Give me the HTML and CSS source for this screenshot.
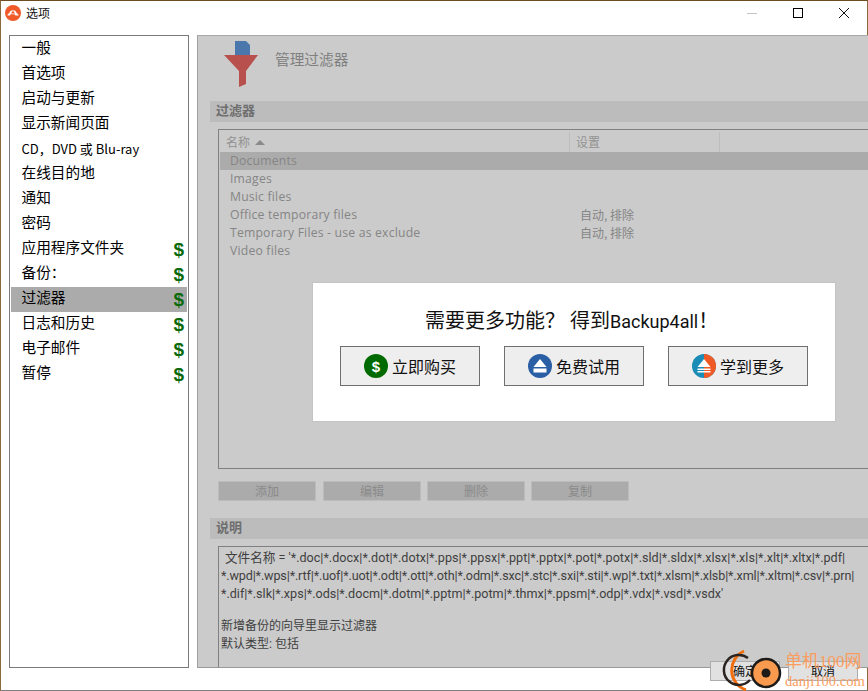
FILE: index.html
```html
<!DOCTYPE html>
<html lang="zh">
<head>
<meta charset="utf-8">
<title>选项</title>
<link rel="stylesheet" href="styles.css">
</head>
<body>
<div class="window">
  <header class="titlebar">
    <svg class="app-icon" viewBox="0 0 16 16"><circle cx="8" cy="8" r="8" fill="#ef5a28"/><path d="M2.500 10.500a2 2 0 0 1 1.800-2.200 3.800 3.800 0 0 1 7.400 0 2 2 0 0 1 1.800 2.200h-3l-1-1.200h-3.900l-.6 1.200z" fill="#fff"/><path d="M8 5.500 10 8.500H6z" fill="#ef5a28"/></svg>
    <span class="title">选项</span>
    <div class="controls">
      <svg class="ctl" viewBox="0 0 46 34"><path d="M18 12.500h10" stroke="#c4c4c4" fill="none"/></svg>
      <svg class="ctl" viewBox="0 0 46 34"><rect x="18.500" y="7.500" width="9" height="9" stroke="#000" fill="none"/></svg>
      <svg class="ctl" viewBox="0 0 46 34"><path d="M18 7l10 10M28 7 18 17" stroke="#111" fill="none"/></svg>
    </div>
  </header>
  <div class="body">
    <nav class="sidebar">
      <div class="nav-item"><span>一般</span></div>
      <div class="nav-item"><span>首选项</span></div>
      <div class="nav-item"><span>启动与更新</span></div>
      <div class="nav-item"><span>显示新闻页面</span></div>
      <div class="nav-item"><span class="nav-small">CD，DVD 或 Blu-ray</span></div>
      <div class="nav-item"><span>在线目的地</span></div>
      <div class="nav-item"><span>通知</span></div>
      <div class="nav-item"><span>密码</span></div>
      <div class="nav-item"><span>应用程序文件夹</span><b class="dollar">$</b></div>
      <div class="nav-item"><span>备份：</span><b class="dollar">$</b></div>
      <div class="nav-item selected"><span>过滤器</span><b class="dollar">$</b></div>
      <div class="nav-item"><span>日志和历史</span><b class="dollar">$</b></div>
      <div class="nav-item"><span>电子邮件</span><b class="dollar">$</b></div>
      <div class="nav-item"><span>暂停</span><b class="dollar">$</b></div>
    </nav>
    <main class="panel">
      <div class="panel-head">
        <svg class="filter-icon" viewBox="0 0 36 46"><path d="M12 0h11l4 4v12H12z" fill="#4a78ad"/><path d="M1 14h34L23 30v13l-7 3V30z" fill="#b8504d"/></svg>
        <span class="panel-title">管理过滤器</span>
      </div>
      <h2 class="section">过滤器</h2>
      <div class="table">
        <div class="thead">
          <div class="th col-name">名称 <i class="sort"></i></div>
          <div class="th col-set">设置</div>
        </div>
        <div class="row selected-row"><span class="col-name">Documents</span><span class="col-set"></span></div>
        <div class="row"><span class="col-name">Images</span><span class="col-set"></span></div>
        <div class="row"><span class="col-name">Music files</span><span class="col-set"></span></div>
        <div class="row"><span class="col-name">Office temporary files</span><span class="col-set">自动, 排除</span></div>
        <div class="row"><span class="col-name">Temporary Files - use as exclude</span><span class="col-set">自动, 排除</span></div>
        <div class="row"><span class="col-name">Video files</span><span class="col-set"></span></div>
      </div>
      <div class="actions">
        <button class="act">添加</button>
        <button class="act">编辑</button>
        <button class="act">删除</button>
        <button class="act">复制</button>
      </div>
      <h2 class="section section-desc">说明</h2>
      <div class="desc">
        <p class="desc-first">文件名称 = '*.doc|*.docx|*.dot|*.dotx|*.pps|*.ppsx|*.ppt|*.pptx|*.pot|*.potx|*.sld|*.sldx|*.xlsx|*.xls|*.xlt|*.xltx|*.pdf|</p>
        <p class="desc-tight">*.wpd|*.wps|*.rtf|*.uof|*.uot|*.odt|*.ott|*.oth|*.odm|*.sxc|*.stc|*.sxi|*.sti|*.wp|*.txt|*.xlsm|*.xlsb|*.xml|*.xltm|*.csv|*.prn|</p>
        <p>*.dif|*.slk|*.xps|*.ods|*.docm|*.dotm|*.pptm|*.potm|*.thmx|*.ppsm|*.odp|*.vdx|*.vsd|*.vsdx'</p>
        <p class="desc-gap">&nbsp;</p>
        <p class="desc-cn">新增备份的向导里显示过滤器</p>
        <p class="desc-cn">默认类型: 包括</p>
      </div>
      <section class="promo">
        <div class="promo-text"><span class="promo-q">需要更多功能？</span><span>得到<span class="promo-latin">Backup4all</span>！</span></div>
        <div class="promo-buttons">
          <button class="promo-btn">
            <svg class="promo-icon" viewBox="0 0 24 24"><circle cx="12" cy="12" r="12" fill="#006a00"/><text x="12" y="17.500" class="promo-dollar">$</text></svg>立即购买
          </button>
          <button class="promo-btn">
            <svg class="promo-icon" viewBox="0 0 24 24"><circle cx="12" cy="12" r="12" fill="#2a5fa6"/><path d="M12 5l6.500 8h-13z" fill="#fff"/><rect x="5.500" y="14.500" width="13" height="4" fill="#fff"/></svg>免费试用
          </button>
          <button class="promo-btn">
            <svg class="promo-icon" viewBox="0 0 24 24"><circle cx="12" cy="12" r="12" fill="#1b8cb5"/><path d="M12 0a12 12 0 0 1 0 24z" fill="#f05a26"/><path d="M12 5l6.500 8h-13z" fill="#fff"/><rect x="5.500" y="14.500" width="13" height="1.500" fill="#fff"/><rect x="5.500" y="17" width="13" height="1.500" fill="#fff"/></svg>学到更多
          </button>
        </div>
      </section>
    </main>
  </div>
  <div class="footer">
    <button class="foot-btn">确定</button>
    <button class="foot-btn">取消</button>
  </div>
  <div class="watermark">
    <svg class="wm-logo" viewBox="0 0 60 44"><path d="M22 1A21 21 0 0 0 24 40" stroke="#f26d0e" stroke-width="3" fill="none"/><path d="M26 8A15 15 0 1 0 28 30" stroke="#2a2320" stroke-width="2.500" fill="none"/><circle cx="44" cy="23" r="14" fill="#fa9a4f" stroke="#1d1a18" stroke-width="2.500"/><circle cx="44" cy="23" r="4.500" fill="#1d1a18"/></svg>
    <div class="wm-text"><span class="wm-cn">单机100网</span><span class="wm-en">danji100.com</span></div>
  </div>
</div>
</body>
</html>
```
FILE: styles.css
```css
* { box-sizing: border-box; }
html, body { margin: 0; padding: 0; }
body { width: 868px; height: 691px; overflow: hidden; background: #fff; font-family: "Open Sans", "Noto Sans CJK SC", sans-serif; }
.window { position: relative; width: 868px; height: 691px; display: flex; flex-direction: column; background: #fff; border-top: 1px solid #6d4c1f; border-left: 1px solid #8a6a3a; border-right: 1px solid #8a6a3a; border-bottom: 1px solid #808080; }
.titlebar { height: 34px; flex: none; display: flex; align-items: flex-start; padding-left: 4px; padding-top: 4px; }
.app-icon { width: 16px; height: 16px; flex: none; }
.title { margin-left: 5px; margin-top: 1px; font: 12px/14px "Noto Sans CJK SC", sans-serif; color: #111; }
.controls { margin-left: auto; margin-top: -4px; display: flex; height: 34px; }
.ctl { width: 46px; height: 34px; display: block; }
.body { flex: none; height: 633px; display: flex; padding-left: 8px; }
.sidebar { width: 180px; flex: none; border: 1px solid #7a7a7a; padding: 1px 1px 0; background: #fff; }
.nav-item { height: 25px; display: flex; align-items: center; justify-content: space-between; padding: 0 3px 0 10.500px; font: 14.67px/20px "Noto Sans CJK SC", sans-serif; color: #000; }
.nav-item span { margin-top: -5px; }
.nav-item .nav-small { font-size: 13px; margin-top: -2px; }
.selected { background: #ababab; }
.dollar { font: bold 19px/25px "Liberation Sans", sans-serif; color: #0a6a0a; margin-top: -1px; }
.panel { position: relative; flex: none; width: 671px; margin-left: 8px; background: #cbcbcb; border-left: 1px solid #a0a0a0; border-top: 1px solid #a8a8a8; border-bottom: 1px solid #999; padding: 0 0 0 12px; overflow: hidden; color: #808080; }
.panel-head { height: 65px; display: flex; align-items: flex-start; padding: 5px 0 0 12px; }
.filter-icon { width: 38px; height: 46px; flex: none; }
.panel-title { margin-left: 15px; margin-top: 8px; font: 14.67px/20px "Noto Sans CJK SC", sans-serif; color: #808080; }
.section { margin: 0 0 7px; height: 21px; background: #bcbcbc; font: bold 13px/17px "Noto Sans CJK SC", sans-serif; color: #6e6e6e; padding-left: 6px; }
.table { margin-left: 8px; height: 340px; border: 1px solid #808080; border-right: 0; padding: 2px 0 0 1px; font-size: 12.200px; letter-spacing: 0.2px; color: #858585; }
.thead { display: flex; height: 20px; }
.th { height: 20px; font: 12px/20px "Noto Sans CJK SC", sans-serif; letter-spacing: 0; padding-left: 6px; border-right: 1px solid #bdbdbd; color: #929292; }
.col-name { width: 350px; flex: none; }
.col-set { width: 150px; flex: none; }
.sort { display: inline-block; width: 0; height: 0; border: 5px solid transparent; border-top: 0; border-bottom: 5px solid #8a8a8a; vertical-align: 2px; margin-left: 2px; }
.row { height: 18px; display: flex; line-height: 17px; }
.row .col-name { padding-left: 10px; }
.row .col-set { padding-left: 10px; font: 12px/17px "Noto Sans CJK SC", sans-serif; letter-spacing: 0; }
.selected-row { background: #ababab; }
.actions { display: flex; gap: 6px; margin: 12px 0 0 8px; height: 20px; }
.act { width: 98px; height: 20px; padding: 0; background: #ababab; border: 1px solid #bcbcbc; color: #8a8a8a; font: 12px/18px "Noto Sans CJK SC", sans-serif; }
.act:first-child { margin-right: 1px; }
.section-desc { margin-top: 17px; }
.desc { margin-left: 8px; height: 122px; border: 1px solid #808080; border-right: 0; padding: 2px 0 0 2px; font: 12.600px/18px Roboto, "Noto Sans CJK SC", sans-serif; color: #3f3f3f; white-space: nowrap; overflow: hidden; }
.desc p { margin: 0; height: 18px; }
.desc .desc-gap { height: 14px; }
.desc .desc-cn { font-size: 12px; }
.desc .desc-tight { letter-spacing: -0.14px; }
.desc-first { padding-left: 4px; }
.promo { position: absolute; left: 114px; top: 246px; width: 524px; height: 140px; background: #fff; border: 1px solid #c4c4c4; color: #111; }
.promo-text { margin-top: 24px; height: 26px; display: flex; padding-left: 112px; font: 20px/26px "Noto Sans CJK SC", sans-serif; color: #111; }
.promo-q { margin-right: 5px; }
.promo-latin { font-family: Roboto, sans-serif; font-size: 18px; }
.promo-buttons { display: flex; gap: 24px; justify-content: center; margin-top: 13px; }
.promo-btn { width: 140px; height: 40px; padding: 0; display: flex; align-items: center; justify-content: center; gap: 4px; background: #eee; border: 1px solid #6f6f6f; font: 16px/20px "Noto Sans CJK SC", sans-serif; color: #111; }
.promo-icon { width: 24px; height: 24px; flex: none; }
.promo-dollar { font: bold 15px "Liberation Sans", sans-serif; fill: #fff; text-anchor: middle; }
.footer { position: absolute; left: 709px; top: 660px; display: flex; gap: 8px; }
.foot-btn { width: 70px; height: 20px; padding: 0; background: #e1e1e1; border: 1px solid #adadad; font: 12px/18px "Noto Sans CJK SC", sans-serif; color: #111; }
.watermark { position: absolute; left: 721px; top: 649px; display: flex; }
.wm-logo { width: 60px; height: 44px; flex: none; overflow: visible; }
.wm-text { display: flex; flex-direction: column; margin-left: 3px; margin-top: 2px; color: #fb9d5e; }
.wm-cn { font: 17px/20px "Liberation Serif", "Noto Sans CJK SC", serif; white-space: nowrap; }
.wm-en { font: 14.600px/16px "Liberation Serif", serif; margin-top: 1px; white-space: nowrap; }
```
